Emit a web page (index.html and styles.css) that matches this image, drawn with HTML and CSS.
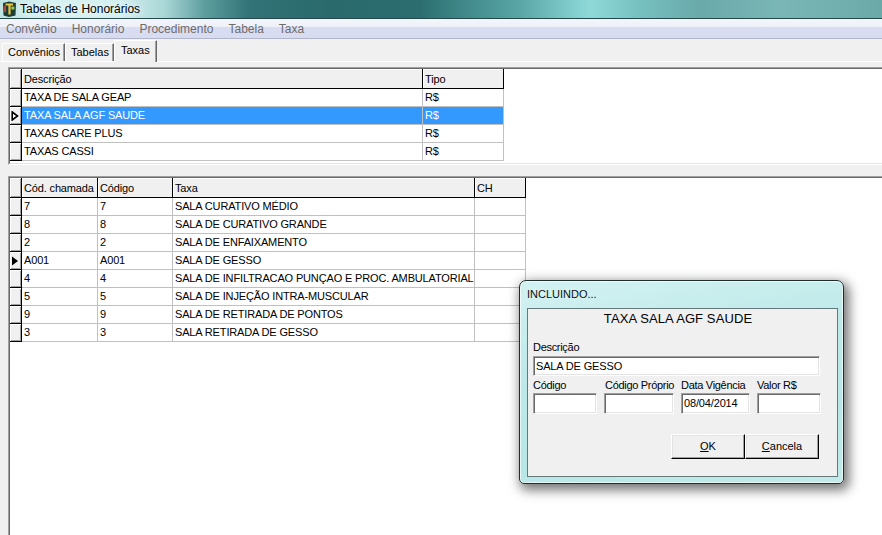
FILE: index.html
```html
<!DOCTYPE html>
<html lang="pt">
<head>
<meta charset="utf-8">
<title>Tabelas de Honorários</title>
<link rel="stylesheet" href="styles.css">
</head>
<body>
<div class="titlebar">
  <svg class="appicon" width="15" height="16" viewBox="0 0 15 16">
    <path d="M1 2 L7 0.5 L14 2 L13.5 14.5 L7 16 L1.5 14.5 Z" fill="#1f3d38"/>
    <path d="M3.5 3.5 L11 3.5" stroke="#e9c63c" stroke-width="2"/>
    <path d="M7.5 3.5 L7.5 13.5" stroke="#e9c63c" stroke-width="2.2"/>
    <circle cx="10.8" cy="7" r="1.8" fill="#93c83e"/>
    <rect x="2.2" y="5" width="1.8" height="6" fill="#c9412f"/>
  </svg>
  <span class="title-text">Tabelas de Honorários</span>
</div>
<div class="menubar">
  <span>Convênio</span><span>Honorário</span><span>Procedimento</span><span>Tabela</span><span>Taxa</span>
</div>
<div class="tabs">
  <div class="tab">Convênios</div>
  <div class="tab">Tabelas</div>
  <div class="tab active">Taxas</div>
</div>
<div class="page">
  <div class="grid top">
    <div class="grid-inner">
      <div class="row cols-top head">
        <div class="ind"></div><div class="hc">Descrição</div><div class="hc">Tipo</div>
      </div>
      <div class="row cols-top">
        <div class="ind"></div><div class="c">TAXA DE SALA GEAP</div><div class="c">R$</div>
      </div>
      <div class="row cols-top sel">
        <div class="ind"><svg width="8" height="10" viewBox="0 0 8 10"><path d="M1.2 1 L6.5 5 L1.2 9 Z" fill="#fff" stroke="#000" stroke-width="1.6" stroke-linejoin="miter"/></svg></div><div class="c">TAXA SALA AGF SAUDE</div><div class="c">R$</div>
      </div>
      <div class="row cols-top">
        <div class="ind"></div><div class="c">TAXAS CARE PLUS</div><div class="c">R$</div>
      </div>
      <div class="row cols-top">
        <div class="ind"></div><div class="c">TAXAS CASSI</div><div class="c">R$</div>
      </div>
    </div>
  </div>
  <div class="grid bottom">
    <div class="grid-inner">
      <div class="row cols-bot head">
        <div class="ind"></div><div class="hc">Cód. chamada</div><div class="hc">Código</div><div class="hc">Taxa</div><div class="hc">CH</div>
      </div>
      <div class="row cols-bot"><div class="ind"></div><div class="c">7</div><div class="c">7</div><div class="c">SALA CURATIVO MÉDIO</div><div class="c"></div></div>
      <div class="row cols-bot"><div class="ind"></div><div class="c">8</div><div class="c">8</div><div class="c">SALA DE CURATIVO GRANDE</div><div class="c"></div></div>
      <div class="row cols-bot"><div class="ind"></div><div class="c">2</div><div class="c">2</div><div class="c">SALA DE ENFAIXAMENTO</div><div class="c"></div></div>
      <div class="row cols-bot"><div class="ind"><svg width="8" height="10" viewBox="0 0 8 10"><path d="M1 0.5 L7 5 L1 9.5 Z" fill="#000"/></svg></div><div class="c">A001</div><div class="c">A001</div><div class="c">SALA DE GESSO</div><div class="c"></div></div>
      <div class="row cols-bot"><div class="ind"></div><div class="c">4</div><div class="c">4</div><div class="c">SALA DE INFILTRACAO PUNÇAO E PROC. AMBULATORIAL</div><div class="c"></div></div>
      <div class="row cols-bot"><div class="ind"></div><div class="c">5</div><div class="c">5</div><div class="c">SALA DE INJEÇÃO INTRA-MUSCULAR</div><div class="c"></div></div>
      <div class="row cols-bot"><div class="ind"></div><div class="c">9</div><div class="c">9</div><div class="c">SALA DE RETIRADA DE PONTOS</div><div class="c"></div></div>
      <div class="row cols-bot"><div class="ind"></div><div class="c">3</div><div class="c">3</div><div class="c">SALA RETIRADA DE GESSO</div><div class="c"></div></div>
    </div>
  </div>
</div>

<div class="dialog">
  <div class="dlg-title">INCLUINDO...</div>
  <div class="dlg-client">
    <div class="dlg-heading">TAXA SALA AGF SAUDE</div>
    <div class="lbl first">Descrição</div>
    <div class="input wide">SALA DE GESSO</div>
    <div class="fields">
      <div class="lbl">Código</div>
      <div class="lbl">Código Próprio</div>
      <div class="lbl">Data Vigência</div>
      <div class="lbl">Valor R$</div>
      <div class="input"></div>
      <div class="input"></div>
      <div class="input">08/04/2014</div>
      <div class="input"></div>
    </div>
    <div class="buttons">
      <div class="btn"><u>O</u>K</div>
      <div class="btn"><u>C</u>ancela</div>
    </div>
  </div>
</div>
</body>
</html>
```
FILE: styles.css
```css
* { box-sizing: border-box; }
html, body { margin: 0; padding: 0; }
body {
  width: 882px;
  height: 535px;
  overflow: hidden;
  position: relative;
  background: #f0f0f0;
  font-family: "Liberation Sans", Arial, sans-serif;
  color: #000;
}

/* title bar */
.titlebar {
  height: 19px;
  display: flex;
  align-items: center;
  gap: 3px;
  padding-left: 2px;
  font-size: 12px;
  border-bottom: 1px solid #24474a;
  background: linear-gradient(90deg, #bfe4e4 0, #d6f1f1 50px, #d2efef 120px, #a9d6d6 165px, #5d9d9e 205px, #317376 250px, #2a6a6c 330px, #2c6e70 420px, #3e8687 460px, #5aa6a7 520px, #8fd9d9 590px, #77c0c0 640px, #6aa9aa 700px, #7ab6b6 780px, #6ba9a9 882px);
}
.appicon { flex: none; }
.title-text { text-shadow: 0 0 6px #fff, 0 0 10px #fff; }

/* menu bar */
.menubar {
  height: 20px;
  display: flex;
  align-items: center;
  gap: 15px;
  padding-left: 6px;
  font-size: 12px;
  color: #6d6d6d;
  border-bottom: 1px solid #b1b6cb;
  background: linear-gradient(#f3f5fb 0, #eef1f9 40%, #d9ddf1 45%, #d7dcf0 100%);
}

/* tabs */
.tabs {
  height: 22px;
  display: flex;
  align-items: flex-end;
  padding-left: 2px;
  font-size: 11px;
}
.tab {
  height: 18px;
  line-height: 17px;
  padding: 0 4px 0 5px;
  border-top: 1px solid #fff;
  border-left: 1px solid #fff;
  border-right: 1px solid #696969;
  box-shadow: inset -1px 0 0 #a0a0a0;
  background: #f0f0f0;
}
.tab.active {
  height: 22px;
  line-height: 19px;
  margin-bottom: -1px;
  position: relative;
  z-index: 1;
  padding: 0 6px 0 6px;
}

/* tab page */
.page {
  border-top: 1px solid #fff;
  padding-top: 5px;
}
.grid {
  margin-left: 8px;
  margin-right: -20px;
  border-top: 1px solid #a0a0a0;
  border-left: 1px solid #a0a0a0;
  border-bottom: 1px solid #fff;
}
.grid-inner {
  border-top: 1px solid #696969;
  border-left: 1px solid #696969;
  border-bottom: 1px solid #e3e3e3;
  background: #fff;
}
.grid.top .grid-inner { height: 96px; }
.grid.bottom { margin-top: 11px; border-bottom: none; }
.grid.bottom .grid-inner { height: 358px; border-bottom: none; }

.row {
  display: grid;
  height: 18px;
  font-size: 11px;
  letter-spacing: -0.15px;
}
.row.head { height: 20px; }
.cols-top { grid-template-columns: 12px 401px 81px; }
.cols-bot { grid-template-columns: 12px 76px 75px 302px 51px; }

.c {
  border-right: 1px solid #c0c0c0;
  border-bottom: 1px solid #c0c0c0;
  padding-left: 2px;
  line-height: 17px;
  white-space: nowrap;
  overflow: hidden;
}
.hc {
  background: #f0f0f0;
  border-right: 1px solid #000;
  border-bottom: 1px solid #000;
  box-shadow: inset 1px 1px 0 #fff;
  padding-left: 2px;
  line-height: 20px;
  white-space: nowrap;
  overflow: hidden;
}
.ind {
  background: #f0f0f0;
  border-right: 1px solid #000;
  border-bottom: 1px solid #000;
  box-shadow: inset 1px 1px 0 #fff, inset -1px -1px 0 #a0a0a0;
  display: flex;
  align-items: center;
  padding-left: 1px;
}
.sel .c { background: #3399ff; color: #fff; }

/* dialog window */
.dialog {
  position: absolute;
  left: 519px;
  top: 280px;
  width: 325px;
  height: 204px;
  border: 1px solid #1e2c2d;
  border-radius: 7px 7px 5px 5px;
  background: linear-gradient(170deg, #d3f2f2 0, #bfe9e9 35%, #b8e6e6 70%, #c2eaea 100%);
  box-shadow: inset 0 0 0 1px rgba(255,255,255,0.65), 3px 4px 12px 2px rgba(0,0,0,0.55);
  padding: 0 5px 0 7px;
}
.dlg-title {
  height: 27px;
  line-height: 27px;
  font-size: 11px;
  color: #101010;
  text-shadow: 0 0 6px #e8ffff;
}
.dlg-client {
  height: 169px;
  background: #f0f0f0;
  border: 1px solid #66797a;
  padding: 0 16px 0 5px;
  font-size: 11px;
}
.dlg-heading {
  height: 19px;
  line-height: 19px;
  text-align: center;
  font-size: 13px;
  letter-spacing: 0.1px;
  padding-left: 2px;
}
.lbl { line-height: 13px; height: 13px; white-space: nowrap; letter-spacing: -0.3px; }
.lbl.first { margin-top: 13px; }
.input {
  height: 20px;
  background: #fff;
  border: 1px solid;
  border-color: #a0a0a0 #fff #fff #a0a0a0;
  box-shadow: inset 1px 1px 0 #696969, inset -1px -1px 0 #e3e3e3;
  padding-left: 2px;
  line-height: 18px;
  white-space: nowrap;
  letter-spacing: -0.15px;
}
.input.wide { margin-top: 2px; width: 287px; }
.fields {
  margin-top: 3px;
  display: grid;
  grid-template-columns: 64px 70px 69px 64px;
  column-gap: 7px;
  row-gap: 1px;
}
.fields .lbl:nth-child(2) { padding-left: 1px; }
.fields .input { height: 21px; }
.buttons {
  margin-top: 20px;
  margin-right: 2px;
  display: flex;
  justify-content: flex-end;
}
.btn {
  width: 74px;
  height: 25px;
  line-height: 22px;
  text-align: center;
  background: #f0f0f0;
  border: 1px solid;
  border-color: #fff #000 #000 #fff;
  box-shadow: inset -1px -1px 0 #a0a0a0, inset 1px 1px 0 #e3e3e3;
}
```
